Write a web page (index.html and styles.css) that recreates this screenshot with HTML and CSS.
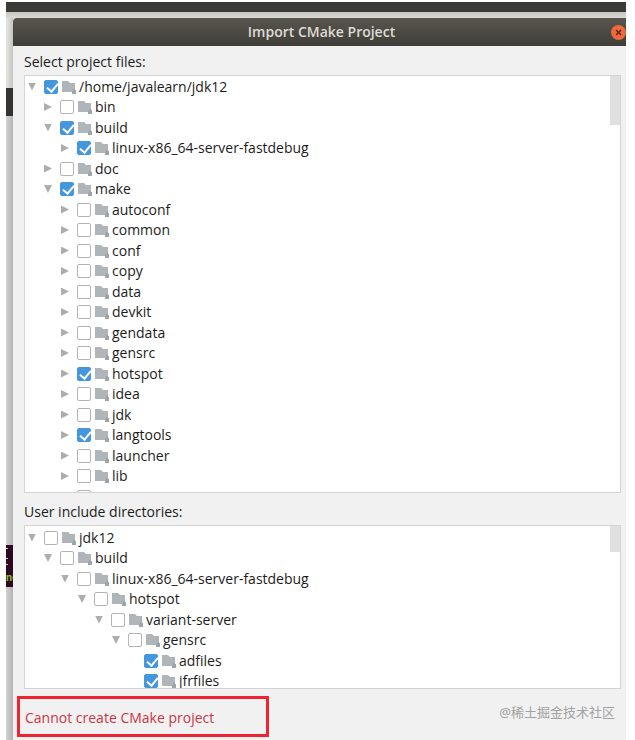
FILE: index.html
```html
<!DOCTYPE html>
<html lang="en">

<head>
  <meta charset="UTF-8">
  <meta name="viewport" content="width=device-width, initial-scale=1.0">
  <title>Import CMake Project</title>
  <link rel="stylesheet" href="styles.css">
</head>

<body>
  <svg class="sprite" aria-hidden="true">
    <symbol id="folder" viewBox="0 0 15 14">
      <path fill="#b0b5b9" d="M0 1h6l2 2h5v6h-2v3H0z" />
      <path fill="#9aa5ad" d="M11 9h2v1h1v4h-4v-3h1z" />
    </symbol>
  </svg>

  <div class="desktop">
    <div class="topbar"></div>
    <div class="workspace">
      <div class="behind">
        <div class="strip-light"></div>
        <div class="strip-dark"></div>
        <div class="strip-grey"></div>
        <div class="strip-terminal"><span class="prompt">ne</span></div>
        <div class="strip-rest"></div>
      </div>

      <main class="dialog">
        <header class="titlebar">
          <h1 class="title">Import CMake Project</h1>
          <button class="close" type="button" aria-label="Close">
            <svg viewBox="0 0 15 15" width="15" height="15">
              <path d="M5 5l5 5M10 5l-5 5" stroke="#5b2412" stroke-width="1.4" fill="none" />
            </svg>
          </button>
        </header>

        <form class="content">
          <h2 class="caption">Select project files:</h2>
          <div class="tree tree-files">
            <div class="row level-0"><button class="toggle open" type="button" aria-label="Collapse"></button><label><input type="checkbox" checked><svg class="folder"><use href="#folder" /></svg>/home/javalearn/jdk12</label></div>
            <div class="row level-1"><button class="toggle" type="button" aria-label="Expand"></button><label><input type="checkbox"><svg class="folder"><use href="#folder" /></svg>bin</label></div>
            <div class="row level-1"><button class="toggle open" type="button" aria-label="Collapse"></button><label><input type="checkbox" checked><svg class="folder"><use href="#folder" /></svg>build</label></div>
            <div class="row level-2"><button class="toggle" type="button" aria-label="Expand"></button><label><input type="checkbox" checked><svg class="folder"><use href="#folder" /></svg>linux-x86_64-server-fastdebug</label></div>
            <div class="row level-1"><button class="toggle" type="button" aria-label="Expand"></button><label><input type="checkbox"><svg class="folder"><use href="#folder" /></svg>doc</label></div>
            <div class="row level-1"><button class="toggle open" type="button" aria-label="Collapse"></button><label><input type="checkbox" checked><svg class="folder"><use href="#folder" /></svg>make</label></div>
            <div class="row level-2"><button class="toggle" type="button" aria-label="Expand"></button><label><input type="checkbox"><svg class="folder"><use href="#folder" /></svg>autoconf</label></div>
            <div class="row level-2"><button class="toggle" type="button" aria-label="Expand"></button><label><input type="checkbox"><svg class="folder"><use href="#folder" /></svg>common</label></div>
            <div class="row level-2"><button class="toggle" type="button" aria-label="Expand"></button><label><input type="checkbox"><svg class="folder"><use href="#folder" /></svg>conf</label></div>
            <div class="row level-2"><button class="toggle" type="button" aria-label="Expand"></button><label><input type="checkbox"><svg class="folder"><use href="#folder" /></svg>copy</label></div>
            <div class="row level-2"><button class="toggle" type="button" aria-label="Expand"></button><label><input type="checkbox"><svg class="folder"><use href="#folder" /></svg>data</label></div>
            <div class="row level-2"><button class="toggle" type="button" aria-label="Expand"></button><label><input type="checkbox"><svg class="folder"><use href="#folder" /></svg>devkit</label></div>
            <div class="row level-2"><button class="toggle" type="button" aria-label="Expand"></button><label><input type="checkbox"><svg class="folder"><use href="#folder" /></svg>gendata</label></div>
            <div class="row level-2"><button class="toggle" type="button" aria-label="Expand"></button><label><input type="checkbox"><svg class="folder"><use href="#folder" /></svg>gensrc</label></div>
            <div class="row level-2"><button class="toggle" type="button" aria-label="Expand"></button><label><input type="checkbox" checked><svg class="folder"><use href="#folder" /></svg>hotspot</label></div>
            <div class="row level-2"><button class="toggle" type="button" aria-label="Expand"></button><label><input type="checkbox"><svg class="folder"><use href="#folder" /></svg>idea</label></div>
            <div class="row level-2"><button class="toggle" type="button" aria-label="Expand"></button><label><input type="checkbox"><svg class="folder"><use href="#folder" /></svg>jdk</label></div>
            <div class="row level-2"><button class="toggle" type="button" aria-label="Expand"></button><label><input type="checkbox" checked><svg class="folder"><use href="#folder" /></svg>langtools</label></div>
            <div class="row level-2"><button class="toggle" type="button" aria-label="Expand"></button><label><input type="checkbox"><svg class="folder"><use href="#folder" /></svg>launcher</label></div>
            <div class="row level-2"><button class="toggle" type="button" aria-label="Expand"></button><label><input type="checkbox"><svg class="folder"><use href="#folder" /></svg>lib</label></div>
            <div class="row level-2"><span class="toggle-space"></span><input type="checkbox" aria-label="Next folder"></div>
            <div class="scrollbar"></div>
          </div>

          <h2 class="caption caption-include">User include directories:</h2>
          <div class="tree tree-include">
            <div class="row level-0"><button class="toggle open" type="button" aria-label="Collapse"></button><label><input type="checkbox"><svg class="folder"><use href="#folder" /></svg>jdk12</label></div>
            <div class="row level-1"><button class="toggle open" type="button" aria-label="Collapse"></button><label><input type="checkbox"><svg class="folder"><use href="#folder" /></svg>build</label></div>
            <div class="row level-2"><button class="toggle open" type="button" aria-label="Collapse"></button><label><input type="checkbox"><svg class="folder"><use href="#folder" /></svg>linux-x86_64-server-fastdebug</label></div>
            <div class="row level-3"><button class="toggle open" type="button" aria-label="Collapse"></button><label><input type="checkbox"><svg class="folder"><use href="#folder" /></svg>hotspot</label></div>
            <div class="row level-4"><button class="toggle open" type="button" aria-label="Collapse"></button><label><input type="checkbox"><svg class="folder"><use href="#folder" /></svg>variant-server</label></div>
            <div class="row level-5"><button class="toggle open" type="button" aria-label="Collapse"></button><label><input type="checkbox"><svg class="folder"><use href="#folder" /></svg>gensrc</label></div>
            <div class="row level-6"><span class="toggle-space"></span><label><input type="checkbox" checked><svg class="folder"><use href="#folder" /></svg>adfiles</label></div>
            <div class="row level-6"><span class="toggle-space"></span><label><input type="checkbox" checked><svg class="folder"><use href="#folder" /></svg>jfrfiles</label></div>
            <div class="scrollbar scrollbar-short"></div>
          </div>
        </form>

        <footer class="footer">
          <p class="error">Cannot create CMake project</p>
          <p class="watermark" lang="zh">@稀土掘金技术社区</p>
        </footer>
      </main>
    </div>
  </div>
</body>

</html>
```
FILE: styles.css
```css
* {
  box-sizing: border-box;
}

body {
  margin: 0;
  background: #fff;
  color: #1c1c1c;
  font-family: "Open Sans", "Noto Sans", sans-serif;
  font-size: 14px;
  line-height: 20px;
}

h1,
h2,
p {
  margin: 0;
}

button {
  padding: 0;
  border: 0;
}

.sprite {
  display: none;
}

.desktop {
  display: flex;
  flex-direction: column;
  min-height: 100vh;
  padding: 2px 9px 0 6px;
}

.topbar {
  height: 10px;
  background: #3b3a36;
}

.workspace {
  display: flex;
  flex: 1;
  padding-top: 6px;
  background: linear-gradient(#c6c5bf, #d9d8d1 6px);
}

/* slice of the windows that lie behind the dialog */
.behind {
  display: flex;
  flex-direction: column;
  width: 7px;
}

.strip-light {
  height: 70px;
  background: linear-gradient(to right, #e6e6e3, #c4c4c2);
}

.strip-dark {
  height: 28px;
  background: #353432;
}

.strip-grey {
  height: 429px;
  background: linear-gradient(to right, #d2d2d2, #b4b4b4);
}

.strip-terminal {
  display: flex;
  align-items: flex-end;
  height: 42px;
  overflow: hidden;
  background:
    linear-gradient(#d8ccd4, #d8ccd4) 0 3px / 2px 1px no-repeat,
    linear-gradient(#d8ccd4, #d8ccd4) 0 13px / 2px 1px no-repeat,
    linear-gradient(#d8ccd4, #d8ccd4) 0 19px / 2px 1px no-repeat,
    #2d0a22;
}

.prompt {
  color: #8fc63a;
  font-family: "Liberation Mono", monospace;
  font-size: 10px;
  font-weight: bold;
  line-height: 16px;
}

.strip-rest {
  flex: 1;
  background: linear-gradient(to right, #d2d2d2, #b4b4b4);
}

.dialog {
  flex: 1;
  min-width: 0;
  background: #f1f1f1;
  border-radius: 4px 0 0 0;
}

.titlebar {
  display: grid;
  grid-template-columns: 15px 1fr 15px;
  align-items: center;
  height: 28px;
  background: linear-gradient(#57554d, #3f3e39);
  border-radius: 4px 0 0 0;
}

.title {
  grid-column: 2;
  padding-left: 4px;
  color: #dfdbd2;
  font-size: 14px;
  font-weight: 600;
  text-align: center;
}

.close {
  display: flex;
  width: 15px;
  height: 15px;
  border-radius: 50%;
  background: #ee6a3c;
}

.content {
  padding: 6px 5px 0 11px;
}

.caption {
  height: 23px;
  font-size: 14px;
  font-weight: 400;
}

.caption-include {
  height: 32px;
  padding-top: 9px;
}

.tree {
  position: relative;
  display: grid;
  grid-auto-rows: 21px 20px;
  align-content: start;
  overflow: hidden;
  background: #fff;
  border: 1px solid #d4d4d4;
}

.tree-files {
  height: 418px;
}

.tree-include {
  height: 164px;
  padding-top: 1px;
}

.row,
.row label {
  display: flex;
  align-items: center;
  white-space: nowrap;
}

.row {
  padding-left: 3px;
}

.level-1 {
  padding-left: 19px;
}

.level-2 {
  padding-left: 36px;
}

.level-3 {
  padding-left: 53px;
}

.level-4 {
  padding-left: 70px;
}

.level-5 {
  padding-left: 87px;
}

.level-6 {
  padding-left: 103px;
}

.toggle,
.toggle-space {
  width: 8px;
  height: 8px;
  margin-right: 8px;
}

.toggle {
  background: #adadad;
  clip-path: polygon(0 0, 100% 50%, 0 100%);
}

.toggle.open {
  clip-path: polygon(0 0, 100% 0, 50% 100%);
}

input[type="checkbox"] {
  position: relative;
  width: 14px;
  height: 14px;
  margin: 0 4px 0 0;
  appearance: none;
  background: #fff;
  border: 1px solid #b4b4b4;
  border-radius: 2px;
}

input[type="checkbox"]:checked {
  background: #4596dc;
  border-color: #4596dc;
}

input[type="checkbox"]:checked::before {
  content: "";
  position: absolute;
  left: 4px;
  top: 0;
  width: 5px;
  height: 9px;
  border: solid #fff;
  border-width: 0 2px 2px 0;
  transform: rotate(40deg);
}

.folder {
  width: 15px;
  height: 14px;
  margin-right: 2px;
}

.scrollbar {
  position: absolute;
  top: 0;
  right: 0;
  width: 10px;
  height: 49px;
  background: #e0e0e0;
}

.scrollbar-short {
  height: 26px;
}

.footer {
  display: flex;
  align-items: flex-start;
  justify-content: space-between;
  padding: 7px 11px 3px 4px;
}

.error {
  width: 252px;
  padding: 9px 5px 6px;
  border: 3px solid #ee2430;
  color: #cb3645;
}

.watermark {
  padding-top: 6px;
  color: #a2a2a2;
  font-family: "Noto Sans", "Noto Sans CJK SC", sans-serif;
  font-size: 13px;
}
```
